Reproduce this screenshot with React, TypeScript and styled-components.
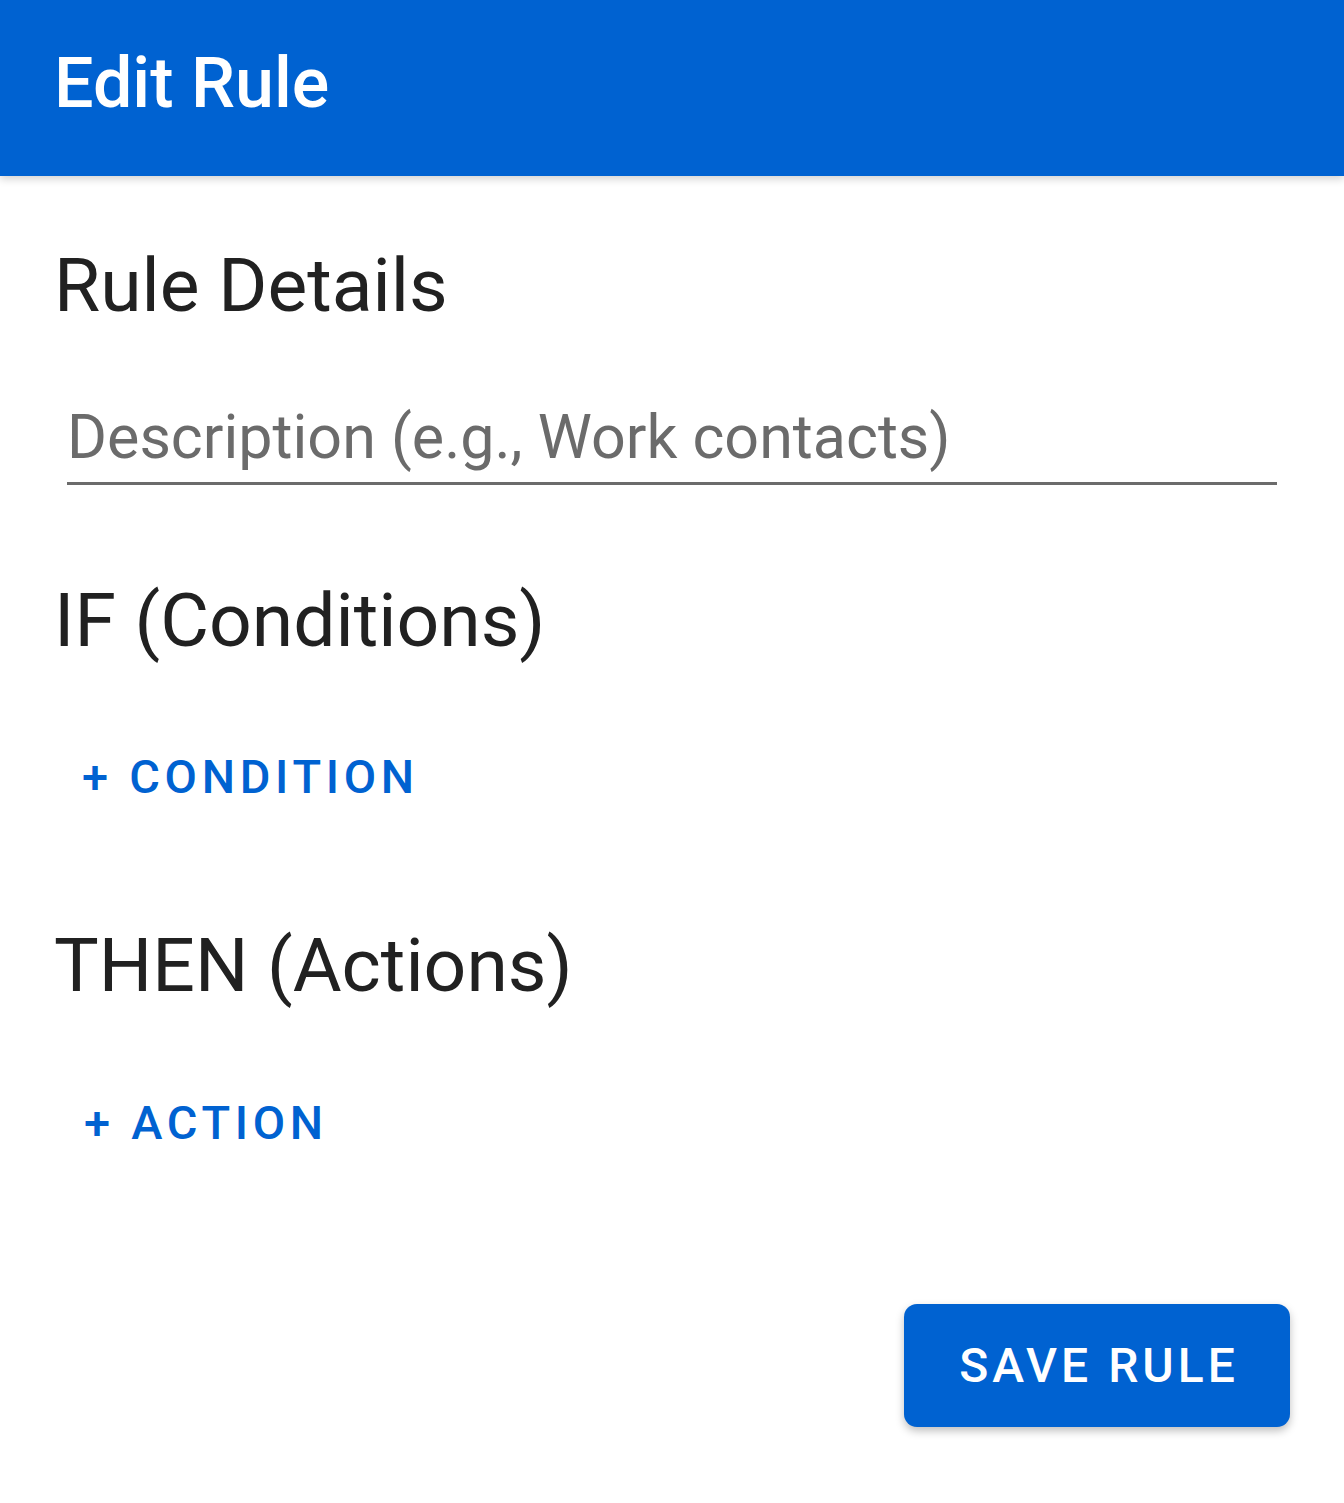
import React from 'react';
import styled, { createGlobalStyle } from 'styled-components';

const GlobalStyle = createGlobalStyle`
  html, body {
    margin: 0;
    padding: 0;
    background: #ffffff;
  }
  body {
    font-family: Roboto, "Noto Sans", "Liberation Sans", sans-serif;
    -webkit-font-smoothing: antialiased;
  }
`;

const BLUE = '#0062d1';

const Page = styled.div`
  width: 1344px;
  min-height: 1503px;
  display: flex;
  flex-direction: column;
  background: #fff;
`;

const TopBar = styled.header`
  height: 176px;
  background: ${BLUE};
  display: flex;
  align-items: center;
  padding-left: 54px;
  box-shadow: 0 3px 8px rgba(0, 0, 0, 0.18);
  position: relative;
  z-index: 1;
`;

const TopTitle = styled.h1`
  margin: 0 0 10px;
  font-size: 70px;
  font-weight: 500;
  color: #fff;
  line-height: 1;
`;

const Content = styled.main`
  display: flex;
  flex-direction: column;
  padding: 0 54px 0 54px;
`;

const Heading = styled.h2<{ $top: number }>`
  margin: ${(p) => p.$top}px 0 0;
  font-size: 75px;
  font-weight: 400;
  line-height: 96px;
  color: #212121;
`;

const Field = styled.label`
  margin: 64px 13px 0 13px;
  padding-bottom: 5px;
  border-bottom: 3px solid #6b6b6b;
  display: block;
`;

const FieldInput = styled.input`
  display: block;
  width: 100%;
  border: none;
  outline: none;
  padding: 0;
  background: transparent;
  font-family: Roboto, "Noto Sans", sans-serif;
  font-size: 61px;
  line-height: 80px;
  height: 80px;
  color: #212121;

  &::placeholder {
    color: #6b6b6b;
    opacity: 1;
  }
`;

const AddButton = styled.button<{ $top: number; $inset?: number }>`
  align-self: flex-start;
  margin: ${(p) => p.$top}px 0 0;
  padding: 0 0 0 ${(p) => p.$inset ?? 28}px;
  border: none;
  background: transparent;
  color: ${BLUE};
  font-family: Roboto, sans-serif;
  font-size: 47px;
  font-weight: 500;
  letter-spacing: 4.7px;
  line-height: 56px;
  cursor: pointer;
`;

const Footer = styled.div`
  display: flex;
  justify-content: flex-end;
  margin-top: 153px;
`;

const SaveButton = styled.button`
  width: 386px;
  height: 123px;
  border: none;
  border-radius: 13px;
  background: ${BLUE};
  color: #fff;
  font-family: Roboto, sans-serif;
  font-size: 48px;
  font-weight: 500;
  letter-spacing: 4px;
  line-height: 56px;
  padding: 0 0 0 4px;
  box-shadow: 0 4px 8px rgba(0, 0, 0, 0.25);
  cursor: pointer;
`;

const App = (): JSX.Element => {
  return (
    <>
      <GlobalStyle />
      <Page>
        <TopBar>
          <TopTitle>Edit Rule</TopTitle>
        </TopBar>
        <Content>
          <Heading $top={61}>Rule Details</Heading>
          <Field>
            <FieldInput placeholder="Description (e.g., Work contacts)" />
          </Field>
          <Heading $top={87}>IF (Conditions)</Heading>
          <AddButton $top={81}>+ CONDITION</AddButton>
          <Heading $top={112}>THEN (Actions)</Heading>
          <AddButton $top={82} $inset={30}>+ ACTION</AddButton>
          <Footer>
            <SaveButton>SAVE RULE</SaveButton>
          </Footer>
        </Content>
      </Page>
    </>
  );
};

export default App;
